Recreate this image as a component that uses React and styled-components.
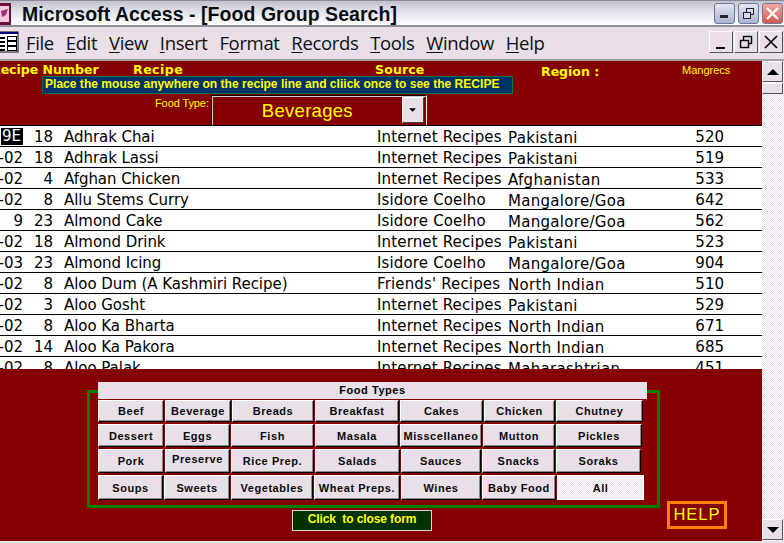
import React from "react";
import styled, { createGlobalStyle } from "styled-components";

const Global = createGlobalStyle`
  html, body { margin: 0; padding: 0; background: #e8dfe8; overflow: hidden; }
  #root { width: 784px; height: 543px; }
  * { box-sizing: border-box; }
`;

const Window = styled.div`
  width: 784px; height: 543px; display: flex; flex-direction: column; overflow: hidden;
  background: #e8dfe8; padding-bottom: 2px;
`;
const TitleBar = styled.div`
  height: 27px; flex: none; display: flex; align-items: center; padding: 1px 1px 0 0; gap: 3px;
  border-top: 1px solid #8a8c9a; border-bottom: 2px solid #8f909c;
  background: linear-gradient(#bfc0cc 0%, #d8d9e2 30%, #f6f6fa 80%, #ffffff 100%);
`;
const TitleText = styled.div`
  font: bold 19.5px "Liberation Sans", sans-serif; color: #0a0f14; margin-left: 7px; flex: 1; white-space: nowrap; letter-spacing: 0.05px; padding-top: 1px;
`;
const AppIcon = styled.svg`width: 12px; height: 24px; flex: none; display: block;`;
const CapButton = styled.div`
  width: 21px; height: 21px; flex: none; border-radius: 3px; border: 1px solid #70789a;
  display: flex; align-items: center; justify-content: center;
  background: ${p => p.$close ? "linear-gradient(#f0a8a0,#d05850)" : "linear-gradient(#e4e6f2,#aeb4d0)"};
`;
const MenuBar = styled.div`
  height: 34px; flex: none; display: flex; align-items: center; padding: 0 1px 2px 0;
  border-bottom: 2px solid #a0a0a0; background: #e8dfe8;
`;
const MenuIcon = styled.svg`width: 19px; height: 22px; flex: none; display: block; margin-right: 7px;`;
const Menu = styled.div`display: flex; flex: 1; gap: 11.8px;`;
const MenuItem = styled.span`
  font: 18.5px "Open Sans", "Noto Sans", sans-serif; color: #101010; letter-spacing: -0.35px;
  u { text-underline-offset: 2px; text-decoration-thickness: 1px; }
`;
const MdiButton = styled.div`
  width: 24px; height: 22px; flex: none; background: #e8dfe8; margin-left: 1px;
  border: 1px solid; border-color: #fff #555 #555 #fff; display: flex; align-items: center; justify-content: center;
`;
const Body = styled.div`flex: 1; display: flex; min-height: 0; background: #850000;`;
const Main = styled.div`flex: 1; min-width: 0; display: flex; flex-direction: column; background: #850000; overflow: hidden;`;

const Header = styled.div`height: 65px; flex: none; display: flex; flex-direction: column; border-bottom: 1px solid #000; overflow: hidden;`;
const HeadLabels = styled.div`height: 15px; flex: none; display: flex; align-items: flex-start;`;
const HeadLabel = styled.span`
  font: bold 12.5px "DejaVu Sans", sans-serif; color: #ffff00; white-space: nowrap; flex: none; width: ${p => p.$w}px;
  padding-top: ${p => p.$top || 1}px; letter-spacing: ${p => p.$ls || 0}px; text-indent: ${p => p.$indent || 0}px;
`;
const Thin = styled.span`font: 11px "Liberation Sans", sans-serif; color: #ffff00; white-space: nowrap; padding-top: 3px;`;
const Banner = styled.div`
  width: 471px; height: 18px; flex: none; margin-left: 42px; background: #003366; border: 1px solid #107050;
  color: #ffff00; font: bold 12px "Liberation Sans", sans-serif; letter-spacing: .03px; line-height: 15px; padding-left: 2px; white-space: nowrap; overflow: hidden;
`;
const FilterRow = styled.div`display: flex; align-items: flex-start; margin-left: 155px; margin-top: 1px; gap: 2px;`;
const FilterLabel = styled.span`font: 11px "Liberation Sans", sans-serif; letter-spacing: -.1px; color: #ffff00; padding-top: 2px; white-space: nowrap;`;
const Combo = styled.div`
  width: 216px; height: 32px; display: flex; align-items: flex-start; background: #850000; padding: 1px;
  border: 1px solid; border-color: #000 #fff #fff #000; box-shadow: inset 1px 1px 0 #ccc;
`;
const ComboValue = styled.div`flex: 1; text-align: center; color: #ffff00; font: 18.5px "Liberation Sans", sans-serif; padding-top: 3px; letter-spacing: .3px;`;
const ComboButton = styled.div`
  width: 22px; height: 26px; background: #e8dfe8; border: 1px solid; border-color: #fff #444 #444 #fff;
  display: flex; align-items: center; justify-content: center; margin-right: 1px;
`;

const Rows = styled.div`height: 243px; flex: none; background: #fff; overflow: hidden;`;
const Row = styled.div`
  height: 21px; display: flex; align-items: center; border-bottom: 1px solid #000; background: #fff; padding-top: 1px;
  font: 15px "DejaVu Sans", sans-serif; color: #000; white-space: nowrap;
`;
const DateCell = styled.div`width: 23px; flex: none; display: flex; justify-content: flex-end;`;
const Selected = styled.span`background: #000; color: #fff; display: inline-block; width: 22px; text-align: left; padding-left: 1px; line-height: 17px; overflow: hidden;`;
const NumCell = styled.div`width: 30px; flex: none; text-align: right;`;
const NameCell = styled.div`width: 313px; margin-left: 11px; flex: none; letter-spacing: -.05px;`;
const SourceCell = styled.div`width: 131px; flex: none; letter-spacing: .15px;`;
const RegionCell = styled.div`width: 186px; flex: none; padding-top: 2px; letter-spacing: .3px;`;
const CodeCell = styled.div`width: 30px; flex: none; text-align: right;`;

const Footer = styled.div`flex: 1; display: flex; flex-direction: column; padding: 13px 0 0 87px; position: relative;`;
const Frame = styled.div`
  width: 573px; height: 118px; flex: none; border: 3px solid #008000; margin-top: 8px; padding-left: 8px;
`;
const GroupTitle = styled.div`
  width: 549px; height: 17px; margin-top: -11px; background: #e8dfe8; text-align: center;
  font: bold 11px "Liberation Sans", sans-serif; letter-spacing: .55px; color: #000; line-height: 17px; margin-bottom: 1px;
`;
const KeyRow = styled.div`display: flex; height: ${p => p.$h}px; margin-bottom: 2px;`;
const Key = styled.div`
  width: ${p => p.$w}px; flex: none; margin-right: 1px; display: flex; align-items: center; justify-content: center;
  background: ${p => p.$on ? "repeating-conic-gradient(#e8dfe8 0 25%, #fff 0 50%) 0 0 / 2px 2px" : "#e8dfe8"};
  border: 1px solid; border-color: ${p => p.$on ? "#fff" : "#fff #000 #000 #fff"};
  box-shadow: ${p => p.$on ? "none" : "inset -1px -1px 0 #8a8a8a"};
  font: bold 11px "Liberation Sans", sans-serif; letter-spacing: .55px; color: #0a0a0a; white-space: nowrap; overflow: hidden;
  padding-bottom: ${p => p.$up ? 5 : 0}px;
`;
const BottomLine = styled.div`display: flex; align-items: flex-start;`;
const CloseButton = styled.div`
  width: 140px; height: 21px; margin-left: 205px; margin-top: 2px; flex: none; background: #003300; border: 1px solid #d8d8d8;
  color: #ffff00; font: bold 12px "Liberation Sans", sans-serif; letter-spacing: -.1px; text-align: center; line-height: 17px; white-space: pre;
`;
const HelpButton = styled.div`
  position: absolute; left: 667px; top: 132px; width: 60px; height: 28px; border: 3px solid #ff8000;
  color: #ffff00; font: 16.5px "Liberation Sans", sans-serif; letter-spacing: 1px; text-align: center; line-height: 20px;
`;

const Scroll = styled.div`
  width: 22px; flex: none; display: flex; flex-direction: column; padding: 0 1px 1px 0;
  background: repeating-conic-gradient(#e8dfe8 0 25%, #fff 0 50%) 0 0 / 2px 2px;
`;
const ScrollButton = styled.div`
  height: 21px; flex: none; background: #e8dfe8; border: 1px solid; border-color: #fff #555 #555 #fff;
  display: flex; align-items: center; justify-content: center;
`;
const ScrollThumb = styled.div`height: 11px; flex: none; margin-top: 1px; background: #e8dfe8; border: 1px solid; border-color: #fff #555 #555 #fff;`;
const ScrollSpace = styled.div`flex: 1;`;

const recipes = [
  ["-02", "18", "Adhrak Chai", "Internet Recipes", "Pakistani", "520"],
  ["-02", "18", "Adhrak Lassi", "Internet Recipes", "Pakistani", "519"],
  ["-02", "4", "Afghan Chicken", "Internet Recipes", "Afghanistan", "533"],
  ["-02", "8", "Allu Stems Curry", "Isidore Coelho", "Mangalore/Goa", "642"],
  ["9", "23", "Almond Cake", "Isidore Coelho", "Mangalore/Goa", "562"],
  ["-02", "18", "Almond Drink", "Internet Recipes", "Pakistani", "523"],
  ["-03", "23", "Almond Icing", "Isidore Coelho", "Mangalore/Goa", "904"],
  ["-02", "8", "Aloo Dum (A Kashmiri Recipe)", "Friends' Recipes", "North Indian", "510"],
  ["-02", "3", "Aloo Gosht", "Internet Recipes", "Pakistani", "529"],
  ["-02", "8", "Aloo Ka Bharta", "Internet Recipes", "North Indian", "671"],
  ["-02", "14", "Aloo Ka Pakora", "Internet Recipes", "North Indian", "685"],
  ["-02", "8", "Aloo Palak", "Internet Recipes", "Maharashtrian", "451"],
];

const keyRows = [
  { h: 22, keys: [["Beef", 66], ["Beverage", 66], ["Breads", 82], ["Breakfast", 84], ["Cakes", 83], ["Chicken", 71], ["Chutney", 87]] },
  { h: 23, keys: [["Dessert", 66], ["Eggs", 65], ["Fish", 83], ["Masala", 84], ["Misscellaneo", 82], ["Mutton", 72], ["Pickles", 86]] },
  { h: 24, keys: [["Pork", 66], ["Preserve", 65, true], ["Rice Prep.", 83], ["Salads", 85], ["Sauces", 80], ["Snacks", 73], ["Soraks", 85]] },
  { h: 25, keys: [["Soups", 65], ["Sweets", 66], ["Vegetables", 82], ["Wheat Preps.", 86], ["Wines", 80], ["Baby Food", 74], ["All", 87]] },
];

const Tri = ({ down, w = 14, h = 7 }) => (
  <svg width={w} height={h} viewBox="0 0 14 7">
    <path d={down ? "M0 0H14L7 7Z" : "M0 7H14L7 0Z"} fill="#000" />
  </svg>
);

export default function App() {
  return (
    <Window>
      <Global />
      <TitleBar>
        <AppIcon viewBox="0 0 12 24">
          <rect x="-8" y="1" width="19" height="22" fill="#6a1038" />
          <rect x="-5" y="4" width="14" height="16" fill="#f3c8dc" />
          <path d="M1 9 L8 7 L6 13 L2 15Z" fill="#a0307a" />
        </AppIcon>
        <TitleText>Microsoft Access - [Food Group Search]</TitleText>
        <CapButton>
          <svg width="9" height="9" viewBox="0 0 9 9"><rect x="0" y="6" width="8" height="3" fill="#223" /></svg>
        </CapButton>
        <CapButton>
          <svg width="13" height="13" viewBox="0 0 13 13" fill="none" stroke="#223"><rect x="4.5" y="1.5" width="7" height="6" /><rect x="1.5" y="5.5" width="7" height="6" fill="#d8daea" /></svg>
        </CapButton>
        <CapButton $close>
          <svg width="13" height="13" viewBox="0 0 13 13" stroke="#fff" strokeWidth="2.4"><path d="M1 1L12 12M12 1L1 12" /></svg>
        </CapButton>
      </TitleBar>
      <MenuBar>
        <MenuIcon viewBox="0 0 19 22">
          <rect x="-2" y="1" width="20" height="20" fill="#fff" stroke="#000" />
          <rect x="-2" y="1" width="20" height="2" fill="#000080" />
          <path d="M0 7H5M0 11H5M0 15H5M0 19H5" stroke="#000" strokeWidth="2" />
          <rect x="7.500" y="5.500" width="9" height="4" fill="#fff" stroke="#000" />
          <rect x="7.500" y="10.500" width="9" height="4" fill="#fff" stroke="#000" />
          <rect x="7.500" y="15.500" width="9" height="4" fill="#fff" stroke="#000" />
        </MenuIcon>
        <Menu>
          <MenuItem><u>F</u>ile</MenuItem>
          <MenuItem><u>E</u>dit</MenuItem>
          <MenuItem><u>V</u>iew</MenuItem>
          <MenuItem><u>I</u>nsert</MenuItem>
          <MenuItem>F<u>o</u>rmat</MenuItem>
          <MenuItem><u>R</u>ecords</MenuItem>
          <MenuItem><u>T</u>ools</MenuItem>
          <MenuItem><u>W</u>indow</MenuItem>
          <MenuItem><u>H</u>elp</MenuItem>
        </Menu>
        <MdiButton>
          <svg width="12" height="14" viewBox="0 0 12 14"><rect x="1" y="12" width="9" height="2" fill="#000" /></svg>
        </MdiButton>
        <MdiButton>
          <svg width="14" height="14" viewBox="0 0 14 14" fill="none" stroke="#000" strokeWidth="1.4"><rect x="4.500" y="1.500" width="8" height="7" /><rect x="1.500" y="5.500" width="8" height="7" fill="#e8dfe8" /></svg>
        </MdiButton>
        <MdiButton>
          <svg width="14" height="14" viewBox="0 0 14 14" stroke="#000" strokeWidth="1.6"><path d="M1 1L13 13M13 1L1 13" /></svg>
        </MdiButton>
      </MenuBar>
      <Body>
        <Main>
          <Header>
            <HeadLabels>
              <HeadLabel $w={133} $indent={-9}>Recipe Number</HeadLabel>
              <HeadLabel $w={242} $ls={0.5}>Recipe</HeadLabel>
              <HeadLabel $w={166} $ls={0.15}>Source</HeadLabel>
              <HeadLabel $w={141} $top={3}>Region :</HeadLabel>
              <Thin>Mangrecs</Thin>
            </HeadLabels>
            <Banner>Place the mouse anywhere on the recipe line and cliick once to see the RECIPE</Banner>
            <FilterRow>
              <FilterLabel>Food Type:</FilterLabel>
              <Combo>
                <ComboValue>Beverages</ComboValue>
                <ComboButton><Tri down w={7} h={4} /></ComboButton>
              </Combo>
            </FilterRow>
          </Header>
          <Rows>
            {recipes.map((r, i) => (
              <Row key={r[2]}>
                <DateCell>{i === 0 ? <Selected>9E</Selected> : r[0]}</DateCell>
                <NumCell>{r[1]}</NumCell>
                <NameCell>{r[2]}</NameCell>
                <SourceCell>{r[3]}</SourceCell>
                <RegionCell>{r[4]}</RegionCell>
                <CodeCell>{r[5]}</CodeCell>
              </Row>
            ))}
          </Rows>
          <Footer>
            <Frame>
              <GroupTitle>Food Types</GroupTitle>
              {keyRows.map(row => (
                <KeyRow key={row.keys[0][0]} $h={row.h}>
                  {row.keys.map(([label, w, up]) => (
                    <Key key={label} $w={w} $up={up} $on={label === "All"}>{label}</Key>
                  ))}
                </KeyRow>
              ))}
            </Frame>
            <BottomLine>
              <CloseButton>{"Click  to close form"}</CloseButton>
            </BottomLine>
            <HelpButton>HELP</HelpButton>
          </Footer>
        </Main>
        <Scroll>
          <ScrollButton><Tri w={12} h={6} /></ScrollButton>
          <ScrollThumb />
          <ScrollSpace />
          <ScrollButton><Tri down w={12} h={6} /></ScrollButton>
        </Scroll>
      </Body>
    </Window>
  );
}
